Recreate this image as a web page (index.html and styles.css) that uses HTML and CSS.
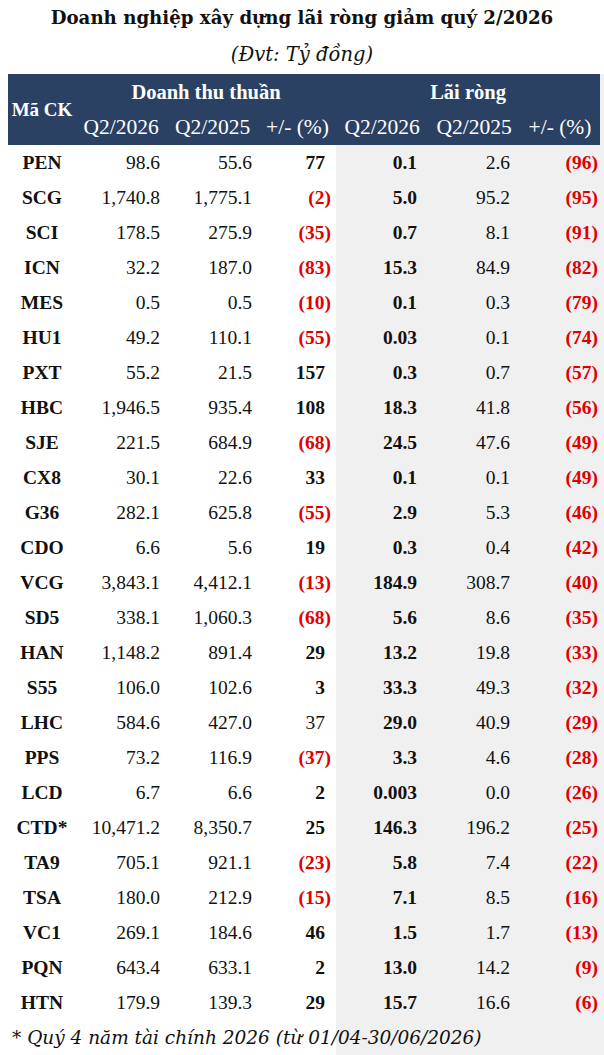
FILE: index.html
```html
<!DOCTYPE html>
<html lang="vi">
<head>
<meta charset="utf-8">
<title>Doanh nghiệp xây dựng lãi ròng giảm quý 2/2026</title>
<link rel="stylesheet" href="styles.css">
</head>
<body>
<div class="page">
  <h1 class="title">Doanh nghiệp xây dựng lãi ròng giảm quý 2/2026</h1>
  <p class="unit">(Đvt: Tỷ đồng)</p>
  <div class="sheet">
    <table class="grid">
      <colgroup>
        <col class="w-code"><col class="w-a"><col class="w-b"><col class="w-c">
        <col class="w-d"><col class="w-e"><col class="w-f">
      </colgroup>
      <thead>
        <tr class="h1">
          <th rowspan="2" class="hcode">Mã CK</th>
          <th colspan="3" class="hgroup">Doanh thu thuần</th>
          <th colspan="3" class="hgroup">Lãi ròng</th>
        </tr>
        <tr class="h2">
          <th>Q2/2026</th><th>Q2/2025</th><th>+/- (%)</th>
          <th>Q2/2026</th><th>Q2/2025</th><th>+/- (%)</th>
        </tr>
      </thead>
      <tbody>
        <tr><td class="code">PEN</td><td class="c2">98.6</td><td class="c3">55.6</td><td class="c4 b pos">77</td><td class="c5 b">0.1</td><td class="c6">2.6</td><td class="c7 b neg">(96)</td></tr>
        <tr><td class="code">SCG</td><td class="c2">1,740.8</td><td class="c3">1,775.1</td><td class="c4 b neg">(2)</td><td class="c5 b">5.0</td><td class="c6">95.2</td><td class="c7 b neg">(95)</td></tr>
        <tr><td class="code">SCI</td><td class="c2">178.5</td><td class="c3">275.9</td><td class="c4 b neg">(35)</td><td class="c5 b">0.7</td><td class="c6">8.1</td><td class="c7 b neg">(91)</td></tr>
        <tr><td class="code">ICN</td><td class="c2">32.2</td><td class="c3">187.0</td><td class="c4 b neg">(83)</td><td class="c5 b">15.3</td><td class="c6">84.9</td><td class="c7 b neg">(82)</td></tr>
        <tr><td class="code">MES</td><td class="c2">0.5</td><td class="c3">0.5</td><td class="c4 b neg">(10)</td><td class="c5 b">0.1</td><td class="c6">0.3</td><td class="c7 b neg">(79)</td></tr>
        <tr><td class="code">HU1</td><td class="c2">49.2</td><td class="c3">110.1</td><td class="c4 b neg">(55)</td><td class="c5 b">0.03</td><td class="c6">0.1</td><td class="c7 b neg">(74)</td></tr>
        <tr><td class="code">PXT</td><td class="c2">55.2</td><td class="c3">21.5</td><td class="c4 b pos">157</td><td class="c5 b">0.3</td><td class="c6">0.7</td><td class="c7 b neg">(57)</td></tr>
        <tr><td class="code">HBC</td><td class="c2">1,946.5</td><td class="c3">935.4</td><td class="c4 b pos">108</td><td class="c5 b">18.3</td><td class="c6">41.8</td><td class="c7 b neg">(56)</td></tr>
        <tr><td class="code">SJE</td><td class="c2">221.5</td><td class="c3">684.9</td><td class="c4 b neg">(68)</td><td class="c5 b">24.5</td><td class="c6">47.6</td><td class="c7 b neg">(49)</td></tr>
        <tr><td class="code">CX8</td><td class="c2">30.1</td><td class="c3">22.6</td><td class="c4 b pos">33</td><td class="c5 b">0.1</td><td class="c6">0.1</td><td class="c7 b neg">(49)</td></tr>
        <tr><td class="code">G36</td><td class="c2">282.1</td><td class="c3">625.8</td><td class="c4 b neg">(55)</td><td class="c5 b">2.9</td><td class="c6">5.3</td><td class="c7 b neg">(46)</td></tr>
        <tr><td class="code">CDO</td><td class="c2">6.6</td><td class="c3">5.6</td><td class="c4 b pos">19</td><td class="c5 b">0.3</td><td class="c6">0.4</td><td class="c7 b neg">(42)</td></tr>
        <tr><td class="code">VCG</td><td class="c2">3,843.1</td><td class="c3">4,412.1</td><td class="c4 b neg">(13)</td><td class="c5 b">184.9</td><td class="c6">308.7</td><td class="c7 b neg">(40)</td></tr>
        <tr><td class="code">SD5</td><td class="c2">338.1</td><td class="c3">1,060.3</td><td class="c4 b neg">(68)</td><td class="c5 b">5.6</td><td class="c6">8.6</td><td class="c7 b neg">(35)</td></tr>
        <tr><td class="code">HAN</td><td class="c2">1,148.2</td><td class="c3">891.4</td><td class="c4 b pos">29</td><td class="c5 b">13.2</td><td class="c6">19.8</td><td class="c7 b neg">(33)</td></tr>
        <tr><td class="code">S55</td><td class="c2">106.0</td><td class="c3">102.6</td><td class="c4 b pos">3</td><td class="c5 b">33.3</td><td class="c6">49.3</td><td class="c7 b neg">(32)</td></tr>
        <tr><td class="code">LHC</td><td class="c2">584.6</td><td class="c3">427.0</td><td class="c4 pos">37</td><td class="c5 b">29.0</td><td class="c6">40.9</td><td class="c7 b neg">(29)</td></tr>
        <tr><td class="code">PPS</td><td class="c2">73.2</td><td class="c3">116.9</td><td class="c4 b neg">(37)</td><td class="c5 b">3.3</td><td class="c6">4.6</td><td class="c7 b neg">(28)</td></tr>
        <tr><td class="code">LCD</td><td class="c2">6.7</td><td class="c3">6.6</td><td class="c4 b pos">2</td><td class="c5 b">0.003</td><td class="c6">0.0</td><td class="c7 b neg">(26)</td></tr>
        <tr><td class="code">CTD*</td><td class="c2">10,471.2</td><td class="c3">8,350.7</td><td class="c4 b pos">25</td><td class="c5 b">146.3</td><td class="c6">196.2</td><td class="c7 b neg">(25)</td></tr>
        <tr><td class="code">TA9</td><td class="c2">705.1</td><td class="c3">921.1</td><td class="c4 b neg">(23)</td><td class="c5 b">5.8</td><td class="c6">7.4</td><td class="c7 b neg">(22)</td></tr>
        <tr><td class="code">TSA</td><td class="c2">180.0</td><td class="c3">212.9</td><td class="c4 b neg">(15)</td><td class="c5 b">7.1</td><td class="c6">8.5</td><td class="c7 b neg">(16)</td></tr>
        <tr><td class="code">VC1</td><td class="c2">269.1</td><td class="c3">184.6</td><td class="c4 b pos">46</td><td class="c5 b">1.5</td><td class="c6">1.7</td><td class="c7 b neg">(13)</td></tr>
        <tr><td class="code">PQN</td><td class="c2">643.4</td><td class="c3">633.1</td><td class="c4 b pos">2</td><td class="c5 b">13.0</td><td class="c6">14.2</td><td class="c7 b neg">(9)</td></tr>
        <tr><td class="code">HTN</td><td class="c2">179.9</td><td class="c3">139.3</td><td class="c4 b pos">29</td><td class="c5 b">15.7</td><td class="c6">16.6</td><td class="c7 b neg">(6)</td></tr>
      </tbody>
    </table>
    <p class="note">* Quý 4 năm tài chính 2026 (từ 01/04-30/06/2026)</p>
  </div>
</div>
</body>
</html>
```

FILE: styles.css
```css
* { box-sizing: border-box; }

html, body {
  margin: 0;
  padding: 0;
  background: #ffffff;
}

.page {
  width: 604px;
  height: 1055px;
  overflow: hidden;
  color: #111111;
  font-family: "Liberation Serif", "Times New Roman", serif;
}

.title {
  margin: 0;
  height: 36px;
  line-height: 36px;
  text-align: center;
  font-family: "DejaVu Serif", serif;
  font-weight: bold;
  font-size: 18.2px;
  color: #111111;
}

.unit {
  margin: 0;
  height: 38px;
  line-height: 38px;
  text-align: center;
  font-family: "DejaVu Serif", serif;
  font-style: italic;
  font-size: 19.5px;
  color: #111111;
}

.sheet {
  background: linear-gradient(to right, #ffffff 0, #ffffff 336px, #f0f0f0 336px, #f0f0f0 100%);
  height: 981px;
}

.grid {
  margin-left: 8px;
  width: 592px;
  table-layout: fixed;
  border-collapse: collapse;
  border-spacing: 0;
}

.w-code { width: 68px; }
.w-a { width: 90px; }
.w-b { width: 93px; }
.w-c { width: 77px; }
.w-d { width: 92px; }
.w-e { width: 92px; }
.w-f { width: 80px; }

thead th {
  background: #2a4163;
  color: #ffffff;
  padding: 0;
  text-align: center;
  white-space: nowrap;
}

.h1 th { height: 36px; }
.h2 th {
  height: 35px;
  font-weight: normal;
  font-size: 21.5px;
}

.hcode {
  font-size: 19px;
  font-weight: bold;
}

.hgroup {
  font-size: 20.5px;
  font-weight: bold;
}

tbody td {
  height: 35px;
  padding: 0;
  font-size: 19.5px;
  line-height: 35px;
  text-align: right;
  white-space: nowrap;
}

tbody td.code {
  text-align: center;
  font-weight: bold;
}

.b { font-weight: bold; }
.neg { color: #e00000; }

.c2 { padding-right: 6px; }
.c3 { padding-right: 7px; }
.c4 { padding-right: 5px; }
.c4.pos { padding-right: 11px; }
.c5 { padding-right: 11px; }
.c6 { padding-right: 10px; }
.c7 { padding-right: 2px; }

.note {
  margin: 0;
  height: 35px;
  line-height: 35px;
  padding-left: 12px;
  font-family: "DejaVu Serif", serif;
  font-style: italic;
  font-size: 18.5px;
  color: #111111;
  white-space: nowrap;
}
```
